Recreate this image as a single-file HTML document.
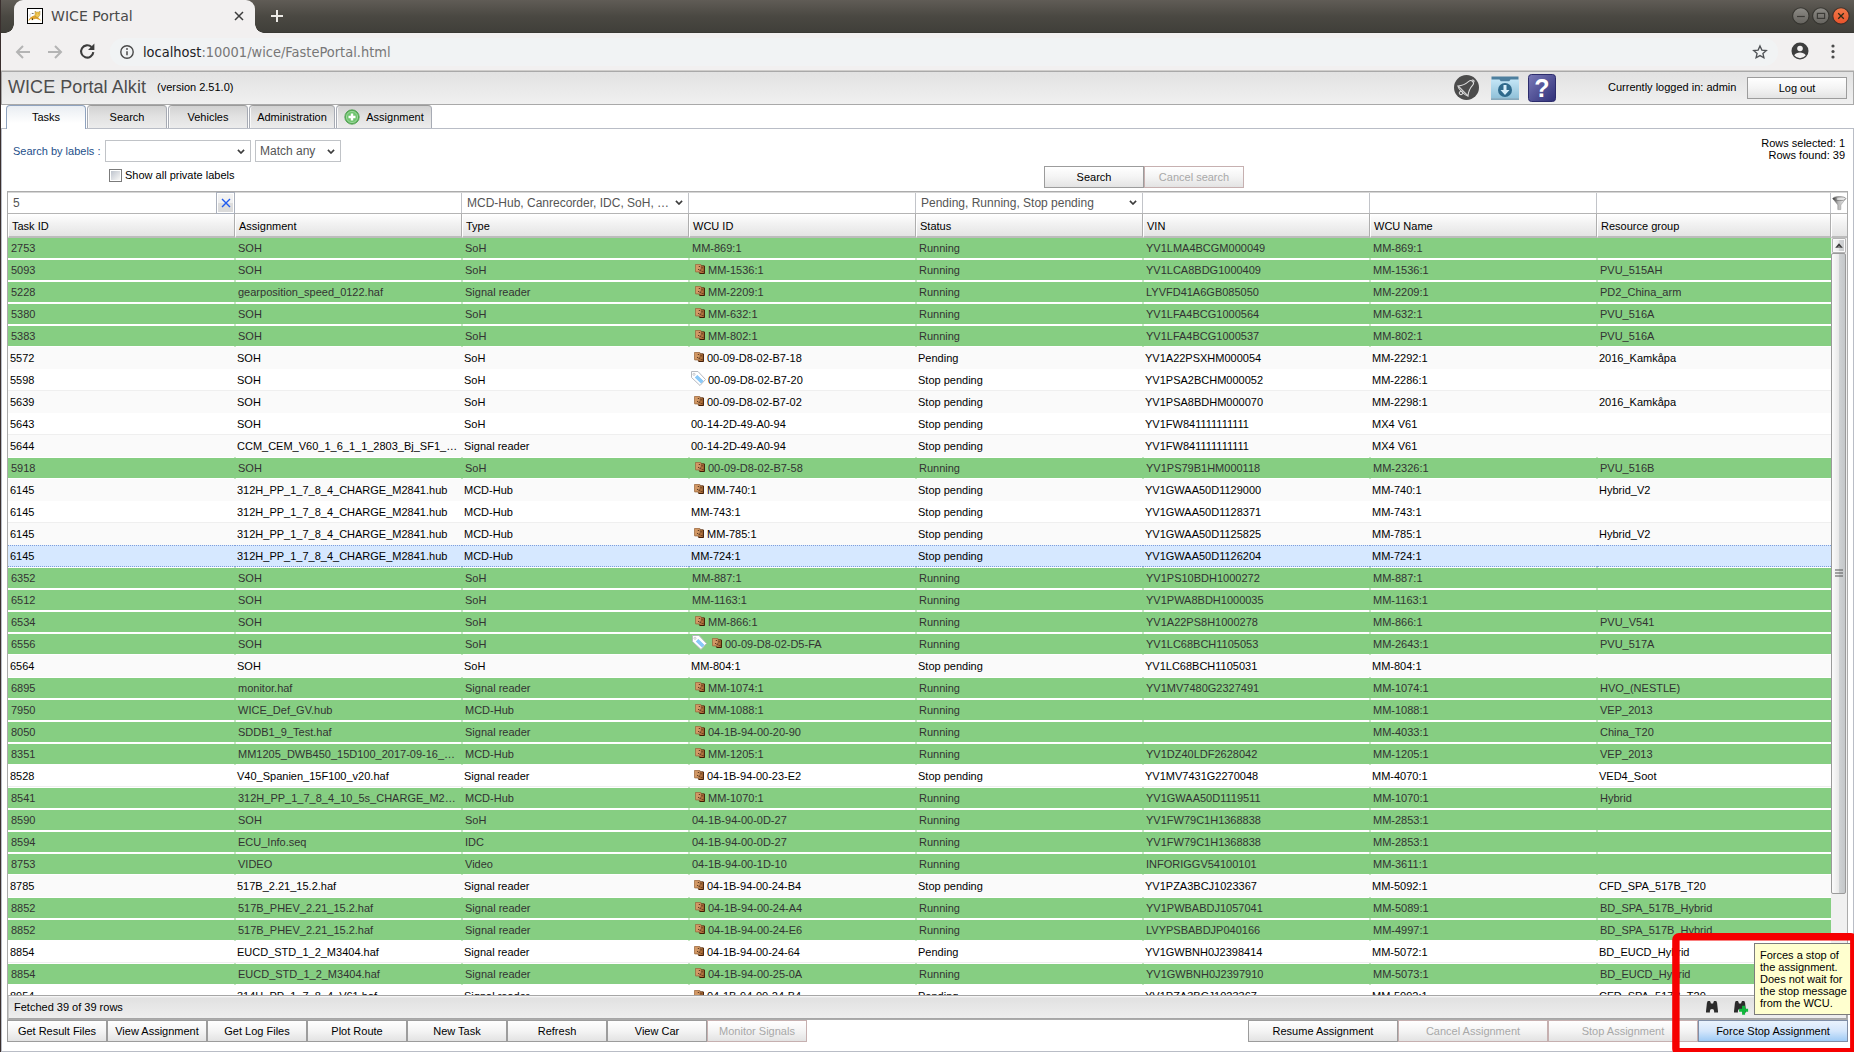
<!DOCTYPE html>
<html><head><meta charset="utf-8"><title>WICE Portal</title>
<style>
*{box-sizing:border-box}
html,body{margin:0;padding:0}
body{width:1854px;height:1052px;overflow:hidden;position:relative;background:#fff;font-family:"Liberation Sans",Arial,sans-serif;font-size:11px;color:#000}
.abs{position:absolute}
svg{display:block}
/* browser chrome */
#titlebar{left:0;top:0;width:1854px;height:33px;background:linear-gradient(#605c56,#4a4842 50%,#403f3a 96%,#35342f)}
#btab{left:14px;top:0;width:241px;height:33px;background:#f2f0f0;border-radius:9px 9px 0 0}
#btab:before,#btab:after{content:"";position:absolute;bottom:0;width:9px;height:9px}
#btab:before{left:-9px;background:radial-gradient(circle at 0 0,transparent 8.5px,#f2f0f0 9px)}
#btab:after{right:-9px;background:radial-gradient(circle at 100% 0,transparent 8.5px,#f2f0f0 9px)}
#toolbar{left:0;top:33px;width:1854px;height:38px;background:#f2f0f0;border-bottom:1px solid #cfcdcb}
#omni{left:110px;top:38px;width:1668px;height:28px;border-radius:14px;background:#f1f3f4}
.ch{font-family:"DejaVu Sans","Liberation Sans",sans-serif}
#ttl{left:51px;top:7px;font-size:13.5px;color:#4a4a4a;line-height:18px;white-space:nowrap;transform:scaleX(1.042);transform-origin:0 0}
#url{left:143px;top:42px;font-size:14px;color:#777;line-height:20px;white-space:nowrap;transform:scaleX(.929);transform-origin:0 0}
#url b{font-weight:normal;color:#202124}
.wb{top:7px;width:17px;height:17px;border-radius:9px;background:linear-gradient(#7a7770,#5a5852);border:1px solid #3a3935}
#lborder{left:0;top:0;width:1px;height:1052px;background:#3a2f2e}
/* page */
#hdr{left:1px;top:71px;width:1853px;height:34px;border:1px solid #a9a9a9;background:linear-gradient(#e2e2e2,#f0f0f0)}
#h1{left:8px;top:76px;font-size:18px;line-height:22px;color:#4d4d4d;white-space:nowrap;letter-spacing:.06px}
#ver{left:157px;top:80px;font-size:11px;line-height:14px;white-space:nowrap}
#logged{left:1608px;top:80px;font-size:11px;line-height:14px;white-space:nowrap}
.tab{top:105px;height:23px;border:1px solid #a7abb4;border-bottom:none;border-radius:4px 4px 0 0;background:linear-gradient(#d2d2d2,#e2e2e2 50%,#ececec);box-shadow:inset 1px 0 0 #f8f8f8;border-top-color:#9b9b9b;text-align:center;line-height:23px;font-size:11px;z-index:3}
.tab.sel{background:linear-gradient(#e9edf2,#fff 75%);border-color:#8fa3bf;box-shadow:none;height:24px}
#pane{left:1px;top:128px;width:1853px;height:924px;border:1px solid #b9bdc6;background:#fff}
.sel1{border:1px solid #c0c3c7;background:#fff;height:22px;top:140px;font-size:12px;line-height:20px;color:#555;padding-left:4px}
.chev{position:absolute;right:5px;top:8px;width:8px;height:5.300px}
.btn{height:22px;border:1px solid #9c9c9c;background:linear-gradient(#ffffff,#f4f4f4 50%,#e3e3e3);text-align:center;line-height:20px;font-size:11px;color:#000;white-space:nowrap}
.btn.dis{color:#a8a8a8;border-color:#c6b0b0}
.btn.over{background:linear-gradient(#eaf3fd,#d4e6fb 50%,#9fcbf5);border-color:#7f8ea6}
/* grid */
#grid{left:7px;top:191px;width:1841px;height:829px;border:1px solid #ababab;background:#fff}
#frow{left:8px;top:192px;width:1839px;height:22px;background:#fff;border-top:1px solid #d6d6d6;border-bottom:1px solid #b4b4b4}
.fi{top:193px;height:20px;width:227px;background:#fff;border-right:1px solid #c2c4c9;font-size:12px;line-height:20px;padding-left:5px;color:#555;white-space:nowrap;overflow:hidden}
.hc{top:214px;height:24px;width:227px;background:linear-gradient(#ffffff,#f3f3f3 40%,#e4e4e4);border-right:1px solid #aeaeae;border-left:1px solid #fff;border-bottom:2px solid #bcbcbc;line-height:22px;padding:1px 0 0 3px;font-size:11px;white-space:nowrap;z-index:2}
#body{left:8px;top:237px;width:1823px;height:758px;overflow:hidden;background:#fff}
.r{height:22px;display:flex;width:1823px}
.c{width:227px;flex:none;height:22px;line-height:22px;padding-left:2px;white-space:nowrap;overflow:hidden;text-overflow:ellipsis;color:#000}
.c:last-child{width:234px}
.r.o .c{background:#fafafa}
.r.e .c{border-bottom:1px solid #efefef}
.r.g{background:linear-gradient(#c6e8c3,#c6e8c3) 0 0/100% 1px no-repeat,linear-gradient(#c6e8c3,#c6e8c3) 0 100%/100% 1px no-repeat,#86ce82}
.r.g .c{background:none;border-top:1px solid #fff;border-bottom:1px solid #fff;line-height:20px;color:#333;margin:0 1px;width:225px;padding-left:2px}
.r.g .c:first-child{margin-left:0;width:226px;padding-left:3px}
.r.g .c:last-child{margin-right:0;width:233px}
.r.s .c{background:#d6e8ff;border-top:1px dotted #7f9edb;border-bottom:1px dotted #7f9edb;line-height:20px}
.ib{display:inline-block;vertical-align:top;margin:5px 3px 0 3px}
.it{display:inline-block;vertical-align:top;margin:2px 2px 0 0}
.r.g .ib{margin-top:4px}
.r.g .it{margin-top:1px}
.it + .ib{margin-left:3px}
#status{left:8px;top:995px;width:1839px;height:24px;border:1px solid #a6a6a6;border-left-color:#c8c8c8;background:linear-gradient(#fbfbfb 0,#e1e1e1 2px,#eeeeee 100%);line-height:23px;padding-left:5px}
#vsb{left:1831px;top:237px;width:16px;height:758px;background:#f0f0f0}
#thumb{left:1831px;top:253px;width:15px;height:641px;border:1px solid #9a9a9a;border-radius:2px;background:linear-gradient(90deg,#fbfbfb,#e9e9e9 50%,#cfd2d4 55%,#c4c7c9)}
#sup{left:1832px;top:238px;width:14px;height:15px;border:1px solid #b4b4b4;border-radius:1px;box-shadow:inset 0 0 0 1px #fafafa;background:linear-gradient(90deg,#fbfbfb,#e8e8e8 50%,#d2d4d6 55%,#c8cacc)}
#red{left:1672px;top:933px;width:185px;height:122px;border:7px solid #f70000;border-radius:5px;z-index:20}
#tip{left:1754px;top:943px;width:100px;height:72px;background:#ffffcf;border:1px solid #7d7d7d;font-size:11px;line-height:12px;padding:5px 0 0 5px;z-index:10;white-space:nowrap}
</style></head><body>
<div id="titlebar" class="abs"></div>
<div id="btab" class="abs"></div>
<div id="toolbar" class="abs"></div>
<div id="omni" class="abs"></div>
<!-- favicon -->
<svg class="abs" style="left:27px;top:8px" width="16" height="16" viewBox="0 0 16 16"><rect x=".5" y=".5" width="15" height="15" fill="#fff" stroke="#000"/><path d="M3.600 9.600C2.200 7.300 3 5.300 5.500 5.300" fill="none" stroke="#c4c4c4" stroke-width=".7"/><path d="M1.200 12.800C3 9.500 5 8 7.800 7.300L11 9.200l3.500 3.600-3-1.300-2.500-.7-3 .7-1 1-1-1.700-1.500 1.400z" fill="#dfa32e"/><path d="M8 3l.9 1h3.200l.9-1v3.600l-1 1.900-1.500.9-1.700-.5-.8-1.900z" fill="#f4cb52" stroke="#8c6c2a" stroke-width=".4"/><path d="M5.200 5h1.300v.7H5.200zM5 10.500h1v1.200H5z" fill="#222"/><path d="M9.300 5h.8v1.600h-.8zM11 5h.8v1.600H11z" fill="#d9a840"/></svg>
<div id="ttl" class="abs ch">WICE Portal</div>
<svg class="abs" style="left:234px;top:11px" width="10" height="10" viewBox="0 0 10 10"><path d="M1 1l8 8M9 1l-8 8" stroke="#3c3c3c" stroke-width="1.500" fill="none"/></svg>
<svg class="abs" style="left:270px;top:9px" width="14" height="14" viewBox="0 0 14 14"><path d="M7 1v12M1 7h12" stroke="#eceae6" stroke-width="2" fill="none"/></svg>
<!-- window buttons -->
<svg class="abs" style="left:1784px;top:0" width="70" height="33" viewBox="0 0 70 33"><defs><linearGradient id="wg" x1="0" y1="0" x2="0" y2="1"><stop offset="0" stop-color="#8d8b86"/><stop offset="1" stop-color="#65635e"/></linearGradient><linearGradient id="wr" x1="0" y1="0" x2="0" y2="1"><stop offset="0" stop-color="#f27a4a"/><stop offset="1" stop-color="#e8522a"/></linearGradient></defs><circle cx="16.800" cy="15.900" r="8.200" fill="url(#wg)" stroke="#35342f" stroke-width="1.100"/><circle cx="36.800" cy="15.900" r="8.200" fill="url(#wg)" stroke="#35342f" stroke-width="1.100"/><circle cx="57" cy="15.900" r="8.200" fill="url(#wr)" stroke="#3a302b" stroke-width="1.100"/><path d="M13 16.500h7.800" stroke="#3c3b37" stroke-width="1.200"/><rect x="33.400" y="13.400" width="7.200" height="5" fill="none" stroke="#3c3b37" stroke-width="1.200"/><path d="M54.200 13.300l5.600 5.400M59.800 13.300l-5.600 5.400" stroke="#2a2a18" stroke-width="1.300"/></svg>
<!-- nav icons -->
<svg class="abs" style="left:14px;top:43px" width="18" height="18" viewBox="0 0 18 18"><path d="M16 9H3M9 3L3 9l6 6" stroke="#b4b4b4" stroke-width="2" fill="none"/></svg>
<svg class="abs" style="left:46px;top:43px" width="18" height="18" viewBox="0 0 18 18"><path d="M2 9h13M9 3l6 6-6 6" stroke="#b4b4b4" stroke-width="2" fill="none"/></svg>
<svg class="abs" style="left:78px;top:41.500px" width="19" height="19" viewBox="0 0 18 18"><path d="M14.500 9.500A5.800 5.800 0 1 1 12.800 4.800" stroke="#3c3c3c" stroke-width="2" fill="none"/><path d="M15.500 1.500v6h-6z" fill="#3c3c3c"/></svg>
<svg class="abs" style="left:119px;top:44px" width="16" height="16" viewBox="0 0 16 16"><circle cx="8" cy="8" r="6.200" fill="none" stroke="#4a4a4a" stroke-width="1.400"/><path d="M8 7.200v4" stroke="#4a4a4a" stroke-width="1.500"/><circle cx="8" cy="5" r=".9" fill="#4a4a4a"/></svg>
<div id="url" class="abs ch"><b>localhost</b>:10001/wice/FastePortal.html</div>
<svg class="abs" style="left:1752px;top:44px" width="16" height="16" viewBox="0 0 18 18"><path d="M9 2.200l2.100 4.600 5 .5-3.800 3.300 1.100 4.900L9 13l-4.400 2.500 1.100-4.900L1.900 7.300l5-.5z" fill="none" stroke="#4f5256" stroke-width="1.500" stroke-linejoin="miter"/></svg>
<svg class="abs" style="left:1791px;top:42px" width="18" height="18" viewBox="0 0 18 18"><circle cx="9" cy="9" r="8.500" fill="#3e3e3e"/><circle cx="9" cy="6.500" r="2.800" fill="#f2f0f0"/><path d="M3.200 13.300c1.200-2 3.400-2.800 5.800-2.800s4.600.8 5.800 2.800A7.200 7.200 0 0 1 9 16.300a7.200 7.200 0 0 1-5.800-3z" fill="#f2f0f0"/></svg>
<svg class="abs" style="left:1830px;top:43px" width="6" height="18" viewBox="0 0 6 18"><circle cx="3" cy="3" r="1.600" fill="#4a4a4a"/><circle cx="3" cy="8.500" r="1.600" fill="#4a4a4a"/><circle cx="3" cy="14" r="1.600" fill="#4a4a4a"/></svg>

<!-- page header -->
<div id="hdr" class="abs"></div>
<div id="h1" class="abs">WICE Portal Alkit</div>
<div id="ver" class="abs">(version 2.51.0)</div>
<!-- bell -->
<svg class="abs" style="left:1453px;top:74px" width="27" height="27" viewBox="0 0 27 27"><circle cx="13.500" cy="13.500" r="12.500" fill="#4c4c4c"/><g transform="rotate(45 13.500 13.500)" fill="none" stroke="#dedede" stroke-width="1"><path d="M10.800 7.200C10.800 4.200 16.200 4.200 16.200 7.200C16.500 12 17.500 15 20.500 18.300H6.500C9.500 15 10.500 12 10.800 7.200z"/><path d="M6.500 18.300C7 20.300 20 20.300 20.500 18.300"/><circle cx="13.500" cy="21.300" r="1.700"/><path d="M12.300 4.900a1.250 1.250 0 1 1 2.400 0"/></g></svg>
<!-- folder -->
<svg class="abs" style="left:1490px;top:75px" width="30" height="26" viewBox="0 0 30 26"><defs><linearGradient id="fg" x1="0" y1="0" x2="0" y2="1"><stop offset="0" stop-color="#c4e6f6"/><stop offset="1" stop-color="#8fc0d8"/></linearGradient></defs><path d="M1.500 1.500h27v6h-27z" fill="#4d7f9e"/><path d="M1 4.500h8.500l1.200 1.800h8.600l1.200-1.800H29v19H1z" fill="url(#fg)"/><path d="M1 23.500h28v1.200H1z" fill="#5a8ba6"/><circle cx="15" cy="15" r="7" fill="#2f6a8c"/><path d="M13.500 10h3v5h3L15 20l-4.500-5h3z" fill="#d6eefa"/></svg>
<!-- help -->
<svg class="abs" style="left:1528px;top:74px" width="28" height="28" viewBox="0 0 28 28"><defs><linearGradient id="hg" x1="0" y1="0" x2="1" y2="1"><stop offset="0" stop-color="#7a7ab8"/><stop offset="1" stop-color="#2f2f78"/></linearGradient></defs><rect x=".5" y=".5" width="27" height="27" rx="3" fill="url(#hg)" stroke="#2c2c6c"/><text x="14" y="23" text-anchor="middle" font-family="Liberation Sans, sans-serif" font-weight="bold" font-size="25" fill="#fff">?</text></svg>
<div id="logged" class="abs">Currently logged in: admin</div>
<div class="abs btn" style="left:1747px;top:77px;width:100px">Log out</div>

<!-- tabs -->
<div id="pane" class="abs"></div>
<div class="abs tab sel" style="left:6px;width:80px">Tasks</div>
<div class="abs tab" style="left:87px;width:80px">Search</div>
<div class="abs tab" style="left:168px;width:80px">Vehicles</div>
<div class="abs tab" style="left:249px;width:86px">Administration</div>
<div class="abs tab" style="left:336px;width:96px;padding-left:22px">Assignment</div>
<svg class="abs" style="left:344px;top:109px;z-index:4" width="16" height="16" viewBox="0 0 16 16"><circle cx="8" cy="8" r="7.200" fill="#5bb25b" stroke="#4a9a4a" stroke-width=".8"/><circle cx="8" cy="8" r="5.600" fill="#6fc46f" stroke="#b4e2b4" stroke-width=".7"/><path d="M8 4.500v7M4.500 8h7" stroke="#fff" stroke-width="2.400"/></svg>

<!-- search form -->
<div class="abs" style="left:13px;top:145px;color:#24508a;line-height:13px;white-space:nowrap">Search by labels :</div>
<div class="abs sel1" style="left:105px;width:146px"><svg class="chev" width="9" height="6" viewBox="0 0 9 6"><path d="M1 1l3.500 3.500L8 1" stroke="#3c3c3c" stroke-width="1.900" fill="none"/></svg></div>
<div class="abs sel1" style="left:255px;width:86px">Match any<svg class="chev" width="9" height="6" viewBox="0 0 9 6"><path d="M1 1l3.500 3.500L8 1" stroke="#3c3c3c" stroke-width="1.900" fill="none"/></svg></div>
<div class="abs" style="left:109px;top:169px;width:13px;height:13px;border:1px solid #7b7b7b;box-shadow:inset 0 0 0 1px #fff;background:linear-gradient(135deg,#c2c7d0 15%,#f4f4f4 85%)"></div>
<div class="abs" style="left:125px;top:169px;line-height:13px;white-space:nowrap">Show all private labels</div>
<div class="abs btn" style="left:1044px;top:166px;width:100px">Search</div>
<div class="abs btn dis" style="left:1144px;top:166px;width:100px">Cancel search</div>
<div class="abs" style="right:9px;top:137px;text-align:right;line-height:12px;white-space:nowrap">Rows selected: 1<br>Rows found: 39</div>

<!-- grid -->
<div id="grid" class="abs"></div>
<div id="frow" class="abs"></div>
<div class="abs fi" style="left:8px;width:208px;border-right:none">5</div>
<div class="abs" style="left:216px;top:192px;width:19px;height:22px;border:1px solid #aab0bc;box-shadow:inset 0 0 0 1px #fff;background:linear-gradient(#f4f4f4,#efefef 50%,#dedede 50%,#dadada)"><svg style="margin:5px 0 0 4px" width="10" height="10" viewBox="0 0 10 10"><path d="M1 1l8 8M9 1l-8 8" stroke="#1f5af0" stroke-width="1.400" fill="none"/></svg></div>
<div class="abs fi" style="left:235px"></div>
<div class="abs fi" style="left:462px">MCD-Hub, Canrecorder, IDC, SoH, …<svg class="chev" style="top:7px" width="9" height="6" viewBox="0 0 9 6"><path d="M1 1l3.500 3.500L8 1" stroke="#3c3c3c" stroke-width="1.900" fill="none"/></svg></div>
<div class="abs fi" style="left:689px"></div>
<div class="abs fi" style="left:916px">Pending, Running, Stop pending<svg class="chev" style="top:7px" width="9" height="6" viewBox="0 0 9 6"><path d="M1 1l3.500 3.500L8 1" stroke="#3c3c3c" stroke-width="1.900" fill="none"/></svg></div>
<div class="abs fi" style="left:1143px"></div>
<div class="abs fi" style="left:1370px"></div>
<div class="abs fi" style="left:1597px;width:234px"></div>
<svg class="abs" style="left:1832px;top:196px" width="15" height="15" viewBox="0 0 15 15"><defs><linearGradient id="fn" x1="0" y1="0" x2="1" y2="0"><stop offset="0" stop-color="#2e2e2e"/><stop offset=".4" stop-color="#b4b4b4"/><stop offset="1" stop-color="#f2f2f2"/></linearGradient></defs><path d="M.8 2.600L5.800 9v4.600h3V9l5-6.400z" fill="url(#fn)" stroke="#8a8a8a" stroke-width=".5"/><ellipse cx="7.300" cy="2.600" rx="6.500" ry="2" fill="url(#fn)" stroke="#6a6a6a" stroke-width=".6"/><ellipse cx="8.500" cy="2.900" rx="3.600" ry=".9" fill="#ededed" opacity=".8"/></svg>
<div class="abs hc" style="left:8px">Task ID</div>
<div class="abs hc" style="left:235px">Assignment</div>
<div class="abs hc" style="left:462px">Type</div>
<div class="abs hc" style="left:689px">WCU ID</div>
<div class="abs hc" style="left:916px">Status</div>
<div class="abs hc" style="left:1143px">VIN</div>
<div class="abs hc" style="left:1370px">WCU Name</div>
<div class="abs hc" style="left:1597px;width:234px">Resource group</div>
<div class="abs hc" style="left:1831px;width:16px;border-right:none"></div>
<div id="body" class="abs">
<div class="r g"><div class="c">2753</div><div class="c">SOH</div><div class="c">SoH</div><div class="c">MM-869:1</div><div class="c">Running</div><div class="c">YV1LMA4BCGM000049</div><div class="c">MM-869:1</div><div class="c"></div></div>
<div class="r g"><div class="c">5093</div><div class="c">SOH</div><div class="c">SoH</div><div class="c"><svg class="ib" width="10" height="10" viewBox="0 0 10 10"><rect x="4.300" y="1.700" width="5.300" height="7.900" rx=".6" fill="#b3733d" stroke="#4a2206" stroke-width=".7"/><path d="M9.300 2v7.500H5" stroke="#3a1602" stroke-width=".9" fill="none"/><rect x=".35" y=".35" width="5.700" height="7.600" rx=".6" fill="#d29865" stroke="#8c5c34" stroke-width=".7"/><path d="M3.800 2h1.200v1H3.800zM6.600 3h1v1.500h-1zM3 5h1v.9H3zM4.500 5.600h1.300V7H4.500zM6.800 7h1.700v.7H6.800z" fill="#4a2c18" opacity=".85"/></svg>MM-1536:1</div><div class="c">Running</div><div class="c">YV1LCA8BDG1000409</div><div class="c">MM-1536:1</div><div class="c">PVU_515AH</div></div>
<div class="r g"><div class="c">5228</div><div class="c">gearposition_speed_0122.haf</div><div class="c">Signal reader</div><div class="c"><svg class="ib" width="10" height="10" viewBox="0 0 10 10"><rect x="4.300" y="1.700" width="5.300" height="7.900" rx=".6" fill="#b3733d" stroke="#4a2206" stroke-width=".7"/><path d="M9.300 2v7.500H5" stroke="#3a1602" stroke-width=".9" fill="none"/><rect x=".35" y=".35" width="5.700" height="7.600" rx=".6" fill="#d29865" stroke="#8c5c34" stroke-width=".7"/><path d="M3.800 2h1.200v1H3.800zM6.600 3h1v1.500h-1zM3 5h1v.9H3zM4.500 5.600h1.300V7H4.500zM6.800 7h1.700v.7H6.800z" fill="#4a2c18" opacity=".85"/></svg>MM-2209:1</div><div class="c">Running</div><div class="c">LYVFD41A6GB085050</div><div class="c">MM-2209:1</div><div class="c">PD2_China_arm</div></div>
<div class="r g"><div class="c">5380</div><div class="c">SOH</div><div class="c">SoH</div><div class="c"><svg class="ib" width="10" height="10" viewBox="0 0 10 10"><rect x="4.300" y="1.700" width="5.300" height="7.900" rx=".6" fill="#b3733d" stroke="#4a2206" stroke-width=".7"/><path d="M9.300 2v7.500H5" stroke="#3a1602" stroke-width=".9" fill="none"/><rect x=".35" y=".35" width="5.700" height="7.600" rx=".6" fill="#d29865" stroke="#8c5c34" stroke-width=".7"/><path d="M3.800 2h1.200v1H3.800zM6.600 3h1v1.500h-1zM3 5h1v.9H3zM4.500 5.600h1.300V7H4.500zM6.800 7h1.700v.7H6.800z" fill="#4a2c18" opacity=".85"/></svg>MM-632:1</div><div class="c">Running</div><div class="c">YV1LFA4BCG1000564</div><div class="c">MM-632:1</div><div class="c">PVU_516A</div></div>
<div class="r g"><div class="c">5383</div><div class="c">SOH</div><div class="c">SoH</div><div class="c"><svg class="ib" width="10" height="10" viewBox="0 0 10 10"><rect x="4.300" y="1.700" width="5.300" height="7.900" rx=".6" fill="#b3733d" stroke="#4a2206" stroke-width=".7"/><path d="M9.300 2v7.500H5" stroke="#3a1602" stroke-width=".9" fill="none"/><rect x=".35" y=".35" width="5.700" height="7.600" rx=".6" fill="#d29865" stroke="#8c5c34" stroke-width=".7"/><path d="M3.800 2h1.200v1H3.800zM6.600 3h1v1.500h-1zM3 5h1v.9H3zM4.500 5.600h1.300V7H4.500zM6.800 7h1.700v.7H6.800z" fill="#4a2c18" opacity=".85"/></svg>MM-802:1</div><div class="c">Running</div><div class="c">YV1LFA4BCG1000537</div><div class="c">MM-802:1</div><div class="c">PVU_516A</div></div>
<div class="r o"><div class="c">5572</div><div class="c">SOH</div><div class="c">SoH</div><div class="c"><svg class="ib" width="10" height="10" viewBox="0 0 10 10"><rect x="4.300" y="1.700" width="5.300" height="7.900" rx=".6" fill="#b3733d" stroke="#4a2206" stroke-width=".7"/><path d="M9.300 2v7.500H5" stroke="#3a1602" stroke-width=".9" fill="none"/><rect x=".35" y=".35" width="5.700" height="7.600" rx=".6" fill="#d29865" stroke="#8c5c34" stroke-width=".7"/><path d="M3.800 2h1.200v1H3.800zM6.600 3h1v1.500h-1zM3 5h1v.9H3zM4.500 5.600h1.300V7H4.500zM6.800 7h1.700v.7H6.800z" fill="#4a2c18" opacity=".85"/></svg>00-09-D8-02-B7-18</div><div class="c">Pending</div><div class="c">YV1A22PSXHM000054</div><div class="c">MM-2292:1</div><div class="c">2016_Kamkåpa</div></div>
<div class="r e"><div class="c">5598</div><div class="c">SOH</div><div class="c">SoH</div><div class="c"><svg class="it" width="15" height="15" viewBox="0 0 15 15"><path d="M.5.500H7l7.500 8L9 14.500l-8.500-8z" fill="#fff" stroke="#b6b9bf" stroke-width="1" stroke-linejoin="round"/><path d="M6.300 4l6.200 6-2.500 2.500-6.200-6z" fill="#7fc3f7"/><path d="M5.500 5l6 6M4.600 6l6 6" stroke="#a6d6fa" stroke-width=".5"/><circle cx="3" cy="3.300" r="1.100" fill="#f4f4f4" stroke="#b9bcc2" stroke-width=".7"/></svg>00-09-D8-02-B7-20</div><div class="c">Stop pending</div><div class="c">YV1PSA2BCHM000052</div><div class="c">MM-2286:1</div><div class="c"></div></div>
<div class="r o"><div class="c">5639</div><div class="c">SOH</div><div class="c">SoH</div><div class="c"><svg class="ib" width="10" height="10" viewBox="0 0 10 10"><rect x="4.300" y="1.700" width="5.300" height="7.900" rx=".6" fill="#b3733d" stroke="#4a2206" stroke-width=".7"/><path d="M9.300 2v7.500H5" stroke="#3a1602" stroke-width=".9" fill="none"/><rect x=".35" y=".35" width="5.700" height="7.600" rx=".6" fill="#d29865" stroke="#8c5c34" stroke-width=".7"/><path d="M3.800 2h1.200v1H3.800zM6.600 3h1v1.500h-1zM3 5h1v.9H3zM4.500 5.600h1.300V7H4.500zM6.800 7h1.700v.7H6.800z" fill="#4a2c18" opacity=".85"/></svg>00-09-D8-02-B7-02</div><div class="c">Stop pending</div><div class="c">YV1PSA8BDHM000070</div><div class="c">MM-2298:1</div><div class="c">2016_Kamkåpa</div></div>
<div class="r e"><div class="c">5643</div><div class="c">SOH</div><div class="c">SoH</div><div class="c">00-14-2D-49-A0-94</div><div class="c">Stop pending</div><div class="c">YV1FW841111111111</div><div class="c">MX4 V61</div><div class="c"></div></div>
<div class="r o"><div class="c">5644</div><div class="c">CCM_CEM_V60_1_6_1_1_2803_Bj_SF1_…</div><div class="c">Signal reader</div><div class="c">00-14-2D-49-A0-94</div><div class="c">Stop pending</div><div class="c">YV1FW841111111111</div><div class="c">MX4 V61</div><div class="c"></div></div>
<div class="r g"><div class="c">5918</div><div class="c">SOH</div><div class="c">SoH</div><div class="c"><svg class="ib" width="10" height="10" viewBox="0 0 10 10"><rect x="4.300" y="1.700" width="5.300" height="7.900" rx=".6" fill="#b3733d" stroke="#4a2206" stroke-width=".7"/><path d="M9.300 2v7.500H5" stroke="#3a1602" stroke-width=".9" fill="none"/><rect x=".35" y=".35" width="5.700" height="7.600" rx=".6" fill="#d29865" stroke="#8c5c34" stroke-width=".7"/><path d="M3.800 2h1.200v1H3.800zM6.600 3h1v1.500h-1zM3 5h1v.9H3zM4.500 5.600h1.300V7H4.500zM6.800 7h1.700v.7H6.800z" fill="#4a2c18" opacity=".85"/></svg>00-09-D8-02-B7-58</div><div class="c">Running</div><div class="c">YV1PS79B1HM000118</div><div class="c">MM-2326:1</div><div class="c">PVU_516B</div></div>
<div class="r o"><div class="c">6145</div><div class="c">312H_PP_1_7_8_4_CHARGE_M2841.hub</div><div class="c">MCD-Hub</div><div class="c"><svg class="ib" width="10" height="10" viewBox="0 0 10 10"><rect x="4.300" y="1.700" width="5.300" height="7.900" rx=".6" fill="#b3733d" stroke="#4a2206" stroke-width=".7"/><path d="M9.300 2v7.500H5" stroke="#3a1602" stroke-width=".9" fill="none"/><rect x=".35" y=".35" width="5.700" height="7.600" rx=".6" fill="#d29865" stroke="#8c5c34" stroke-width=".7"/><path d="M3.800 2h1.200v1H3.800zM6.600 3h1v1.500h-1zM3 5h1v.9H3zM4.500 5.600h1.300V7H4.500zM6.800 7h1.700v.7H6.800z" fill="#4a2c18" opacity=".85"/></svg>MM-740:1</div><div class="c">Stop pending</div><div class="c">YV1GWAA50D1129000</div><div class="c">MM-740:1</div><div class="c">Hybrid_V2</div></div>
<div class="r e"><div class="c">6145</div><div class="c">312H_PP_1_7_8_4_CHARGE_M2841.hub</div><div class="c">MCD-Hub</div><div class="c">MM-743:1</div><div class="c">Stop pending</div><div class="c">YV1GWAA50D1128371</div><div class="c">MM-743:1</div><div class="c"></div></div>
<div class="r o"><div class="c">6145</div><div class="c">312H_PP_1_7_8_4_CHARGE_M2841.hub</div><div class="c">MCD-Hub</div><div class="c"><svg class="ib" width="10" height="10" viewBox="0 0 10 10"><rect x="4.300" y="1.700" width="5.300" height="7.900" rx=".6" fill="#b3733d" stroke="#4a2206" stroke-width=".7"/><path d="M9.300 2v7.500H5" stroke="#3a1602" stroke-width=".9" fill="none"/><rect x=".35" y=".35" width="5.700" height="7.600" rx=".6" fill="#d29865" stroke="#8c5c34" stroke-width=".7"/><path d="M3.800 2h1.200v1H3.800zM6.600 3h1v1.500h-1zM3 5h1v.9H3zM4.500 5.600h1.300V7H4.500zM6.800 7h1.700v.7H6.800z" fill="#4a2c18" opacity=".85"/></svg>MM-785:1</div><div class="c">Stop pending</div><div class="c">YV1GWAA50D1125825</div><div class="c">MM-785:1</div><div class="c">Hybrid_V2</div></div>
<div class="r s"><div class="c">6145</div><div class="c">312H_PP_1_7_8_4_CHARGE_M2841.hub</div><div class="c">MCD-Hub</div><div class="c">MM-724:1</div><div class="c">Stop pending</div><div class="c">YV1GWAA50D1126204</div><div class="c">MM-724:1</div><div class="c"></div></div>
<div class="r g"><div class="c">6352</div><div class="c">SOH</div><div class="c">SoH</div><div class="c">MM-887:1</div><div class="c">Running</div><div class="c">YV1PS10BDH1000272</div><div class="c">MM-887:1</div><div class="c"></div></div>
<div class="r g"><div class="c">6512</div><div class="c">SOH</div><div class="c">SoH</div><div class="c">MM-1163:1</div><div class="c">Running</div><div class="c">YV1PWA8BDH1000035</div><div class="c">MM-1163:1</div><div class="c"></div></div>
<div class="r g"><div class="c">6534</div><div class="c">SOH</div><div class="c">SoH</div><div class="c"><svg class="ib" width="10" height="10" viewBox="0 0 10 10"><rect x="4.300" y="1.700" width="5.300" height="7.900" rx=".6" fill="#b3733d" stroke="#4a2206" stroke-width=".7"/><path d="M9.300 2v7.500H5" stroke="#3a1602" stroke-width=".9" fill="none"/><rect x=".35" y=".35" width="5.700" height="7.600" rx=".6" fill="#d29865" stroke="#8c5c34" stroke-width=".7"/><path d="M3.800 2h1.200v1H3.800zM6.600 3h1v1.500h-1zM3 5h1v.9H3zM4.500 5.600h1.300V7H4.500zM6.800 7h1.700v.7H6.800z" fill="#4a2c18" opacity=".85"/></svg>MM-866:1</div><div class="c">Running</div><div class="c">YV1A22PS8H1000278</div><div class="c">MM-866:1</div><div class="c">PVU_V541</div></div>
<div class="r g"><div class="c">6556</div><div class="c">SOH</div><div class="c">SoH</div><div class="c"><svg class="it" width="15" height="15" viewBox="0 0 15 15"><path d="M.5.500H7l7.500 8L9 14.500l-8.500-8z" fill="#fff" stroke="#b6b9bf" stroke-width="1" stroke-linejoin="round"/><path d="M6.300 4l6.200 6-2.500 2.500-6.200-6z" fill="#7fc3f7"/><path d="M5.500 5l6 6M4.600 6l6 6" stroke="#a6d6fa" stroke-width=".5"/><circle cx="3" cy="3.300" r="1.100" fill="#f4f4f4" stroke="#b9bcc2" stroke-width=".7"/></svg><svg class="ib" width="10" height="10" viewBox="0 0 10 10"><rect x="4.300" y="1.700" width="5.300" height="7.900" rx=".6" fill="#b3733d" stroke="#4a2206" stroke-width=".7"/><path d="M9.300 2v7.500H5" stroke="#3a1602" stroke-width=".9" fill="none"/><rect x=".35" y=".35" width="5.700" height="7.600" rx=".6" fill="#d29865" stroke="#8c5c34" stroke-width=".7"/><path d="M3.800 2h1.200v1H3.800zM6.600 3h1v1.500h-1zM3 5h1v.9H3zM4.500 5.600h1.300V7H4.500zM6.800 7h1.700v.7H6.800z" fill="#4a2c18" opacity=".85"/></svg>00-09-D8-02-D5-FA</div><div class="c">Running</div><div class="c">YV1LC68BCH1105053</div><div class="c">MM-2643:1</div><div class="c">PVU_517A</div></div>
<div class="r o"><div class="c">6564</div><div class="c">SOH</div><div class="c">SoH</div><div class="c">MM-804:1</div><div class="c">Stop pending</div><div class="c">YV1LC68BCH1105031</div><div class="c">MM-804:1</div><div class="c"></div></div>
<div class="r g"><div class="c">6895</div><div class="c">monitor.haf</div><div class="c">Signal reader</div><div class="c"><svg class="ib" width="10" height="10" viewBox="0 0 10 10"><rect x="4.300" y="1.700" width="5.300" height="7.900" rx=".6" fill="#b3733d" stroke="#4a2206" stroke-width=".7"/><path d="M9.300 2v7.500H5" stroke="#3a1602" stroke-width=".9" fill="none"/><rect x=".35" y=".35" width="5.700" height="7.600" rx=".6" fill="#d29865" stroke="#8c5c34" stroke-width=".7"/><path d="M3.800 2h1.200v1H3.800zM6.600 3h1v1.500h-1zM3 5h1v.9H3zM4.500 5.600h1.300V7H4.500zM6.800 7h1.700v.7H6.800z" fill="#4a2c18" opacity=".85"/></svg>MM-1074:1</div><div class="c">Running</div><div class="c">YV1MV7480G2327491</div><div class="c">MM-1074:1</div><div class="c">HVO_(NESTLE)</div></div>
<div class="r g"><div class="c">7950</div><div class="c">WICE_Def_GV.hub</div><div class="c">MCD-Hub</div><div class="c"><svg class="ib" width="10" height="10" viewBox="0 0 10 10"><rect x="4.300" y="1.700" width="5.300" height="7.900" rx=".6" fill="#b3733d" stroke="#4a2206" stroke-width=".7"/><path d="M9.300 2v7.500H5" stroke="#3a1602" stroke-width=".9" fill="none"/><rect x=".35" y=".35" width="5.700" height="7.600" rx=".6" fill="#d29865" stroke="#8c5c34" stroke-width=".7"/><path d="M3.800 2h1.200v1H3.800zM6.600 3h1v1.500h-1zM3 5h1v.9H3zM4.500 5.600h1.300V7H4.500zM6.800 7h1.700v.7H6.800z" fill="#4a2c18" opacity=".85"/></svg>MM-1088:1</div><div class="c">Running</div><div class="c"></div><div class="c">MM-1088:1</div><div class="c">VEP_2013</div></div>
<div class="r g"><div class="c">8050</div><div class="c">SDDB1_9_Test.haf</div><div class="c">Signal reader</div><div class="c"><svg class="ib" width="10" height="10" viewBox="0 0 10 10"><rect x="4.300" y="1.700" width="5.300" height="7.900" rx=".6" fill="#b3733d" stroke="#4a2206" stroke-width=".7"/><path d="M9.300 2v7.500H5" stroke="#3a1602" stroke-width=".9" fill="none"/><rect x=".35" y=".35" width="5.700" height="7.600" rx=".6" fill="#d29865" stroke="#8c5c34" stroke-width=".7"/><path d="M3.800 2h1.200v1H3.800zM6.600 3h1v1.500h-1zM3 5h1v.9H3zM4.500 5.600h1.300V7H4.500zM6.800 7h1.700v.7H6.800z" fill="#4a2c18" opacity=".85"/></svg>04-1B-94-00-20-90</div><div class="c">Running</div><div class="c"></div><div class="c">MM-4033:1</div><div class="c">China_T20</div></div>
<div class="r g"><div class="c">8351</div><div class="c">MM1205_DWB450_15D100_2017-09-16_…</div><div class="c">MCD-Hub</div><div class="c"><svg class="ib" width="10" height="10" viewBox="0 0 10 10"><rect x="4.300" y="1.700" width="5.300" height="7.900" rx=".6" fill="#b3733d" stroke="#4a2206" stroke-width=".7"/><path d="M9.300 2v7.500H5" stroke="#3a1602" stroke-width=".9" fill="none"/><rect x=".35" y=".35" width="5.700" height="7.600" rx=".6" fill="#d29865" stroke="#8c5c34" stroke-width=".7"/><path d="M3.800 2h1.200v1H3.800zM6.600 3h1v1.500h-1zM3 5h1v.9H3zM4.500 5.600h1.300V7H4.500zM6.800 7h1.700v.7H6.800z" fill="#4a2c18" opacity=".85"/></svg>MM-1205:1</div><div class="c">Running</div><div class="c">YV1DZ40LDF2628042</div><div class="c">MM-1205:1</div><div class="c">VEP_2013</div></div>
<div class="r e"><div class="c">8528</div><div class="c">V40_Spanien_15F100_v20.haf</div><div class="c">Signal reader</div><div class="c"><svg class="ib" width="10" height="10" viewBox="0 0 10 10"><rect x="4.300" y="1.700" width="5.300" height="7.900" rx=".6" fill="#b3733d" stroke="#4a2206" stroke-width=".7"/><path d="M9.300 2v7.500H5" stroke="#3a1602" stroke-width=".9" fill="none"/><rect x=".35" y=".35" width="5.700" height="7.600" rx=".6" fill="#d29865" stroke="#8c5c34" stroke-width=".7"/><path d="M3.800 2h1.200v1H3.800zM6.600 3h1v1.500h-1zM3 5h1v.9H3zM4.500 5.600h1.300V7H4.500zM6.800 7h1.700v.7H6.800z" fill="#4a2c18" opacity=".85"/></svg>04-1B-94-00-23-E2</div><div class="c">Stop pending</div><div class="c">YV1MV7431G2270048</div><div class="c">MM-4070:1</div><div class="c">VED4_Soot</div></div>
<div class="r g"><div class="c">8541</div><div class="c">312H_PP_1_7_8_4_10_5s_CHARGE_M2…</div><div class="c">MCD-Hub</div><div class="c"><svg class="ib" width="10" height="10" viewBox="0 0 10 10"><rect x="4.300" y="1.700" width="5.300" height="7.900" rx=".6" fill="#b3733d" stroke="#4a2206" stroke-width=".7"/><path d="M9.300 2v7.500H5" stroke="#3a1602" stroke-width=".9" fill="none"/><rect x=".35" y=".35" width="5.700" height="7.600" rx=".6" fill="#d29865" stroke="#8c5c34" stroke-width=".7"/><path d="M3.800 2h1.200v1H3.800zM6.600 3h1v1.500h-1zM3 5h1v.9H3zM4.500 5.600h1.300V7H4.500zM6.800 7h1.700v.7H6.800z" fill="#4a2c18" opacity=".85"/></svg>MM-1070:1</div><div class="c">Running</div><div class="c">YV1GWAA50D1119511</div><div class="c">MM-1070:1</div><div class="c">Hybrid</div></div>
<div class="r g"><div class="c">8590</div><div class="c">SOH</div><div class="c">SoH</div><div class="c">04-1B-94-00-0D-27</div><div class="c">Running</div><div class="c">YV1FW79C1H1368838</div><div class="c">MM-2853:1</div><div class="c"></div></div>
<div class="r g"><div class="c">8594</div><div class="c">ECU_Info.seq</div><div class="c">IDC</div><div class="c">04-1B-94-00-0D-27</div><div class="c">Running</div><div class="c">YV1FW79C1H1368838</div><div class="c">MM-2853:1</div><div class="c"></div></div>
<div class="r g"><div class="c">8753</div><div class="c">VIDEO</div><div class="c">Video</div><div class="c">04-1B-94-00-1D-10</div><div class="c">Running</div><div class="c">INFORIGGV54100101</div><div class="c">MM-3611:1</div><div class="c"></div></div>
<div class="r o"><div class="c">8785</div><div class="c">517B_2.21_15.2.haf</div><div class="c">Signal reader</div><div class="c"><svg class="ib" width="10" height="10" viewBox="0 0 10 10"><rect x="4.300" y="1.700" width="5.300" height="7.900" rx=".6" fill="#b3733d" stroke="#4a2206" stroke-width=".7"/><path d="M9.300 2v7.500H5" stroke="#3a1602" stroke-width=".9" fill="none"/><rect x=".35" y=".35" width="5.700" height="7.600" rx=".6" fill="#d29865" stroke="#8c5c34" stroke-width=".7"/><path d="M3.800 2h1.200v1H3.800zM6.600 3h1v1.500h-1zM3 5h1v.9H3zM4.500 5.600h1.300V7H4.500zM6.800 7h1.700v.7H6.800z" fill="#4a2c18" opacity=".85"/></svg>04-1B-94-00-24-B4</div><div class="c">Stop pending</div><div class="c">YV1PZA3BCJ1023367</div><div class="c">MM-5092:1</div><div class="c">CFD_SPA_517B_T20</div></div>
<div class="r g"><div class="c">8852</div><div class="c">517B_PHEV_2.21_15.2.haf</div><div class="c">Signal reader</div><div class="c"><svg class="ib" width="10" height="10" viewBox="0 0 10 10"><rect x="4.300" y="1.700" width="5.300" height="7.900" rx=".6" fill="#b3733d" stroke="#4a2206" stroke-width=".7"/><path d="M9.300 2v7.500H5" stroke="#3a1602" stroke-width=".9" fill="none"/><rect x=".35" y=".35" width="5.700" height="7.600" rx=".6" fill="#d29865" stroke="#8c5c34" stroke-width=".7"/><path d="M3.800 2h1.200v1H3.800zM6.600 3h1v1.500h-1zM3 5h1v.9H3zM4.500 5.600h1.300V7H4.500zM6.800 7h1.700v.7H6.800z" fill="#4a2c18" opacity=".85"/></svg>04-1B-94-00-24-A4</div><div class="c">Running</div><div class="c">YV1PWBABDJ1057041</div><div class="c">MM-5089:1</div><div class="c">BD_SPA_517B_Hybrid</div></div>
<div class="r g"><div class="c">8852</div><div class="c">517B_PHEV_2.21_15.2.haf</div><div class="c">Signal reader</div><div class="c"><svg class="ib" width="10" height="10" viewBox="0 0 10 10"><rect x="4.300" y="1.700" width="5.300" height="7.900" rx=".6" fill="#b3733d" stroke="#4a2206" stroke-width=".7"/><path d="M9.300 2v7.500H5" stroke="#3a1602" stroke-width=".9" fill="none"/><rect x=".35" y=".35" width="5.700" height="7.600" rx=".6" fill="#d29865" stroke="#8c5c34" stroke-width=".7"/><path d="M3.800 2h1.200v1H3.800zM6.600 3h1v1.500h-1zM3 5h1v.9H3zM4.500 5.600h1.300V7H4.500zM6.800 7h1.700v.7H6.800z" fill="#4a2c18" opacity=".85"/></svg>04-1B-94-00-24-E6</div><div class="c">Running</div><div class="c">LVYPSBABDJP040166</div><div class="c">MM-4997:1</div><div class="c">BD_SPA_517B_Hybrid</div></div>
<div class="r e"><div class="c">8854</div><div class="c">EUCD_STD_1_2_M3404.haf</div><div class="c">Signal reader</div><div class="c"><svg class="ib" width="10" height="10" viewBox="0 0 10 10"><rect x="4.300" y="1.700" width="5.300" height="7.900" rx=".6" fill="#b3733d" stroke="#4a2206" stroke-width=".7"/><path d="M9.300 2v7.500H5" stroke="#3a1602" stroke-width=".9" fill="none"/><rect x=".35" y=".35" width="5.700" height="7.600" rx=".6" fill="#d29865" stroke="#8c5c34" stroke-width=".7"/><path d="M3.800 2h1.200v1H3.800zM6.600 3h1v1.500h-1zM3 5h1v.9H3zM4.500 5.600h1.300V7H4.500zM6.800 7h1.700v.7H6.800z" fill="#4a2c18" opacity=".85"/></svg>04-1B-94-00-24-64</div><div class="c">Pending</div><div class="c">YV1GWBNH0J2398414</div><div class="c">MM-5072:1</div><div class="c">BD_EUCD_Hybrid</div></div>
<div class="r g"><div class="c">8854</div><div class="c">EUCD_STD_1_2_M3404.haf</div><div class="c">Signal reader</div><div class="c"><svg class="ib" width="10" height="10" viewBox="0 0 10 10"><rect x="4.300" y="1.700" width="5.300" height="7.900" rx=".6" fill="#b3733d" stroke="#4a2206" stroke-width=".7"/><path d="M9.300 2v7.500H5" stroke="#3a1602" stroke-width=".9" fill="none"/><rect x=".35" y=".35" width="5.700" height="7.600" rx=".6" fill="#d29865" stroke="#8c5c34" stroke-width=".7"/><path d="M3.800 2h1.200v1H3.800zM6.600 3h1v1.500h-1zM3 5h1v.9H3zM4.500 5.600h1.300V7H4.500zM6.800 7h1.700v.7H6.800z" fill="#4a2c18" opacity=".85"/></svg>04-1B-94-00-25-0A</div><div class="c">Running</div><div class="c">YV1GWBNH0J2397910</div><div class="c">MM-5073:1</div><div class="c">BD_EUCD_Hybrid</div></div>
<div class="r e"><div class="c">8954</div><div class="c">314H_PP_1_7_8_4_V61.haf</div><div class="c">Signal reader</div><div class="c"><svg class="ib" width="10" height="10" viewBox="0 0 10 10"><rect x="4.300" y="1.700" width="5.300" height="7.900" rx=".6" fill="#b3733d" stroke="#4a2206" stroke-width=".7"/><path d="M9.300 2v7.500H5" stroke="#3a1602" stroke-width=".9" fill="none"/><rect x=".35" y=".35" width="5.700" height="7.600" rx=".6" fill="#d29865" stroke="#8c5c34" stroke-width=".7"/><path d="M3.800 2h1.200v1H3.800zM6.600 3h1v1.500h-1zM3 5h1v.9H3zM4.500 5.600h1.300V7H4.500zM6.800 7h1.700v.7H6.800z" fill="#4a2c18" opacity=".85"/></svg>04-1B-94-00-24-B4</div><div class="c">Pending</div><div class="c">YV1PZA3BCJ1023367</div><div class="c">MM-5092:1</div><div class="c">CFD_SPA_517B_T20</div></div>
</div>
<div id="vsb" class="abs"></div>
<div id="sup" class="abs"><svg style="margin:4px 0 0 2px" width="8" height="5" viewBox="0 0 8 5"><path d="M4 .3L7.800 4.700H.2z" fill="#3a3a3a"/><path d="M4 2.800L6 4.700H2z" fill="#9a9a9a"/></svg></div>
<div id="thumb" class="abs"></div>
<svg class="abs" style="left:1835px;top:569px" width="8" height="9" viewBox="0 0 8 9"><path d="M0 1h8M0 4h8M0 7h8" stroke="#555" stroke-width="1.200"/></svg>
<div id="status" class="abs">Fetched 39 of 39 rows</div>
<!-- binoculars -->
<svg class="abs" style="left:1706px;top:1001px" width="12" height="12" viewBox="0 0 12 12"><path d="M1.500 0H4.200V1.200H4.700L4.900 2.600H7.100L7.300 1.200H7.800V0H10.500V1.200H11L12 10.200V11.600H8.100V10A2.100 2.100 0 0 0 3.900 10V11.600H0V10.200L1 1.200H1.500z" fill="#2b2b2b"/></svg>
<svg class="abs" style="left:1734px;top:1001px" width="16" height="15" viewBox="0 0 16 15"><path d="M1.500 0H4.200V1.200H4.700L4.900 2.600H7.100L7.300 1.200H7.800V0H10.500V1.200H11L12 10.200V11.600H8.100V10A2.100 2.100 0 0 0 3.900 10V11.600H0V10.200L1 1.200H1.500z" fill="#2b2b2b"/><path d="M8.100 4.800h3v3h3v3h-3v3h-3v-3h-3v-3h3z" fill="#0fb83c"/></svg>

<!-- bottom buttons -->
<div class="abs btn" style="left:7px;top:1020px;width:100px">Get Result Files</div>
<div class="abs btn" style="left:107px;top:1020px;width:100px">View Assignment</div>
<div class="abs btn" style="left:207px;top:1020px;width:100px">Get Log Files</div>
<div class="abs btn" style="left:307px;top:1020px;width:100px">Plot Route</div>
<div class="abs btn" style="left:407px;top:1020px;width:100px">New Task</div>
<div class="abs btn" style="left:507px;top:1020px;width:100px">Refresh</div>
<div class="abs btn" style="left:607px;top:1020px;width:100px">View Car</div>
<div class="abs btn dis" style="left:707px;top:1020px;width:100px">Monitor Signals</div>
<div class="abs btn" style="left:1248px;top:1020px;width:150px">Resume Assignment</div>
<div class="abs btn dis" style="left:1398px;top:1020px;width:150px">Cancel Assignment</div>
<div class="abs btn dis" style="left:1548px;top:1020px;width:150px">Stop Assignment</div>
<div class="abs btn over" style="left:1698px;top:1020px;width:150px">Force Stop Assignment</div>

<div id="tip" class="abs">Forces a stop of<br>the assignment.<br>Does not wait for<br>the stop message<br>from the WCU.</div>
<svg class="abs" style="left:1660px;top:920px;z-index:20" width="194" height="132" viewBox="0 0 194 132"><rect x="15.900" y="16.700" width="177.900" height="115" rx="3" fill="none" stroke="#f60000" stroke-width="7.400"/></svg>
<div id="lborder" class="abs"></div>
</body></html>
